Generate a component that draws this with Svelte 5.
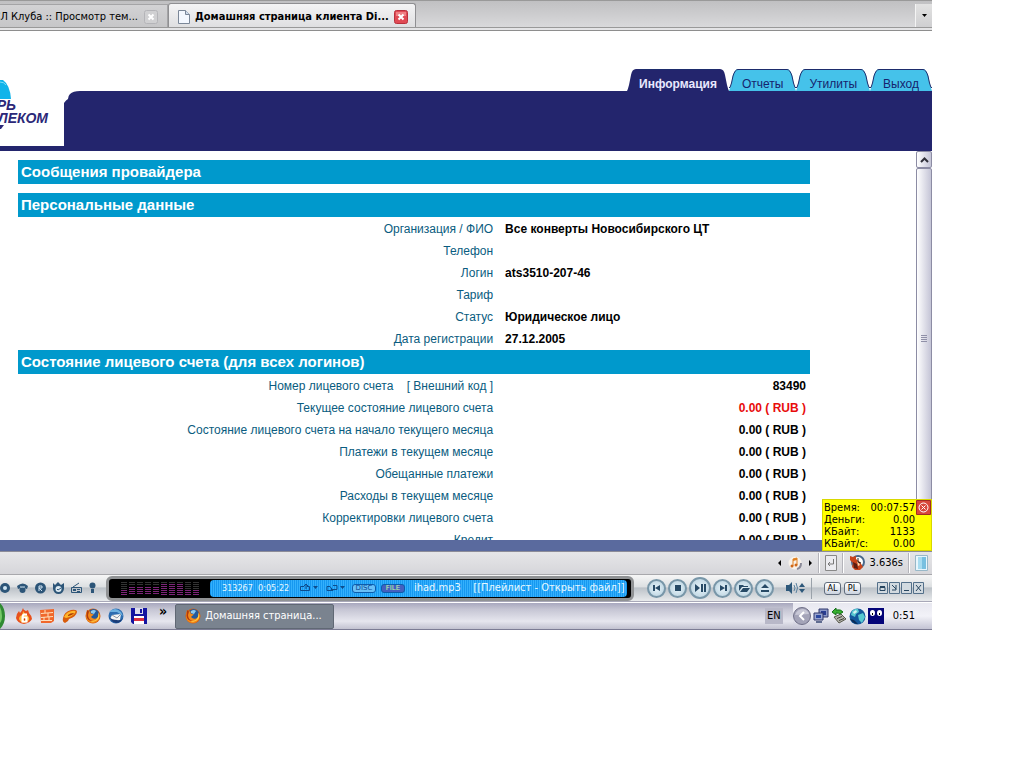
<script>
  const menu = [
    { name: 'Отчеты' },
    { name: 'Утилиты' },
    { name: 'Выход' }
  ];
  const personal = [
    ['Организация / ФИО', 'Все конверты Новосибирского ЦТ'],
    ['Телефон', ''],
    ['Логин', 'ats3510-207-46'],
    ['Тариф', ''],
    ['Статус', 'Юридическое лицо'],
    ['Дата регистрации', '27.12.2005']
  ];
  const account = [
    ['Номер лицевого счета \u00a0\u00a0 [ Внешний код ]', '83490'],
    ['Текущее состояние лицевого счета', '0.00 ( RUB )', true],
    ['Состояние лицевого счета на начало текущего месяца', '0.00 ( RUB )'],
    ['Платежи в текущем месяце', '0.00 ( RUB )'],
    ['Обещанные платежи', '0.00 ( RUB )'],
    ['Расходы в текущем месяце', '0.00 ( RUB )'],
    ['Корректировки лицевого счета', '0.00 ( RUB )'],
    ['Кредит', '0.00 ( RUB )']
  ];
  const meter = [
    ['Время:', '00:07:57'],
    ['Деньги:', '0.00'],
    ['КБайт:', '1133'],
    ['КБайт/с:', '0.00']
  ];
  const spectrum = [2, 3, 3, 3, 3, 4, 4, 4, 2, 2];
  const transport = [
    { label: 'Назад', d: 'M5 6h2v6H5zM12 6v6L7 9z' },
    { label: 'Стоп', d: 'M6 6h6v6H6z' },
    { label: 'Пуск', d: 'M4 5l5 4-5 4zM10 5h2v8h-2zM13 5h2v8h-2z' },
    { label: 'Вперёд', d: 'M6 6l5 3-5 3zM11 6h2v6h-2z' },
    { label: 'Открыть', d: 'M4 6h4l1 1h4v1H7l-3 4zM8 9h7l-3 4H5z' },
    { label: 'Извлечь', d: 'M9 5l4 4H5zM5 11h8v2H5z' }
  ];
</script>

{#snippet firefox(size)}
  <svg width={size} height={size} viewBox="0 0 16 16" aria-hidden="true">
    <circle cx="8" cy="8" r="7.500" fill="#d8600c" />
    <circle cx="8.500" cy="6.500" r="5.500" fill="#245a9e" />
    <path d="M6 3q3-2 5 0L9 6 6 5z" fill="#8cc8ee" />
    <path d="M2 2l2 1.500Q5 3 6 4L5 5l2 1 2 .5-2 1.500L6 9q2 2.500 5 1.500 3-1.500 2.500-5 2 4-.5 7T7 15Q1.500 14 1 8.500 1 5 2 2z" fill="#f28a1c" />
    <path d="M2 2l2 1.500L3 7q0 5 5 6Q2 13 1.500 8z" fill="#b23a0c" />
    <path d="M13.500 4.500q2.500 5-2 8-3 2-6 .5 5 .5 7-3 1-2 1-5.500z" fill="#ffd24a" />
  </svg>
{/snippet}

<div class="desktop">
  <nav class="browser-tabs">
    <button class="btab old"><span>СЛ Клуба :: Просмотр тем...</span>
      <svg width="14" height="14" viewBox="0 0 14 14" aria-hidden="true"><rect x=".5" y=".5" width="13" height="13" rx="2" fill="#d0d0d2" stroke="#b4b4b8" /><path d="M4.500 4.500l5 5m0-5l-5 5" stroke="#fff" stroke-width="2" /></svg>
    </button>
    <button class="btab current">
      <svg width="12" height="14" viewBox="0 0 12 14" aria-hidden="true"><path d="M.5.5h7l4 4v9H.5z" fill="#f4f8ff" stroke="#7b8798" /><path d="M7.500.5v4h4" fill="#cfdcee" stroke="#7b8798" /></svg>
      <strong>Домашняя страница клиента Di...</strong>
      <svg width="14" height="14" viewBox="0 0 14 14" aria-hidden="true"><rect x=".5" y=".5" width="13" height="13" rx="2" fill="#e04a54" stroke="#b8303c" /><path d="M2 2h10v4H2z" fill="#ee8084" /><path d="M4.500 4.500l5 5m0-5l-5 5" stroke="#fff" stroke-width="2" /></svg>
    </button>
    <button class="all-tabs" aria-label="Список вкладок"><svg width="5" height="3" viewBox="0 0 5 3" aria-hidden="true"><path d="M0 0h5L2.500 3z" /></svg></button>
  </nav>

  <header>
    <div class="logo">
      <svg width="12" height="19" viewBox="0 0 12 19" aria-hidden="true"><path d="M0 0h3q7 5 8 19H0z" fill="#0fb4ea" /><path d="M0 2q4 0 6 3" fill="none" stroke="#7fdcf6" /></svg>
      <div class="logo-name"><span>СИБИРЬ</span><span>ТЕЛЕКОМ</span></div>
      <svg width="4" height="4" viewBox="0 0 4 4" aria-hidden="true"><path d="M0 0h4L1 4H0z" fill="#2b2878" /></svg>
    </div>
    <div class="banner">
      <nav class="menu">
        <a class="active" href="#info">
          <svg class="edge" width="12" height="22" viewBox="0 0 12 22" aria-hidden="true"><path d="M12 0H9Q5 0 4 6L2 16Q1 20 0 22h12z" fill="#23256d" /></svg>
          <span>Информация</span>
          <svg class="edge" width="12" height="22" viewBox="0 0 12 22" aria-hidden="true"><path d="M0 0h3q4 0 5 6l2 10q1 4 2 6H0z" fill="#23256d" /></svg>
        </a>
        {#each menu as item}
          <a href="#menu">
            <svg class="edge" width="13" height="22" viewBox="0 0 13 22" aria-hidden="true"><path d="M13 0H9Q6 0 4 6L2 16 0 22h13z" fill="#45c2ea" /><path d="M13 .5H9Q6 .5 4 7L2.500 14 1 18.500H0" fill="none" stroke="#1d2c6c" /></svg>
            <span>{item.name}</span>
            <svg class="edge" width="13" height="22" viewBox="0 0 13 22" aria-hidden="true"><path d="M0 0h4q3 0 5 6l2 10 2 6H0z" fill="#45c2ea" /><path d="M0 .5h4Q7 .5 9 7l1.500 7 1.500 4.500h1" fill="none" stroke="#1d2c6c" /></svg>
          </a>
        {/each}
      </nav>
      <svg class="corner" width="16" height="12" viewBox="0 0 16 12" aria-hidden="true"><path d="M0 0h16Q9 0 6 3 4 5 4 8 2 9 0 12z" fill="#fff" /></svg>
    </div>
  </header>

  <main>
    <div class="content">
      <h2>Сообщения провайдера</h2>
      <h2 class="spaced">Персональные данные</h2>
      <table>
        <tbody>
          {#each personal as [name, value]}
            <tr><th scope="row">{name}</th><td>{value}</td></tr>
          {/each}
        </tbody>
      </table>
      <h2>Состояние лицевого счета (для всех логинов)</h2>
      <table class="money">
        <tbody>
          {#each account as [name, value, debt]}
            <tr><th scope="row">{name}</th><td class:debt>{value}</td></tr>
          {/each}
        </tbody>
      </table>
    </div>
    <div class="scroll">
      <button aria-label="Вверх"><svg width="9" height="6" viewBox="0 0 9 6" aria-hidden="true"><path d="M1 5l3.500-3.500L8 5" fill="none" stroke="#30303a" stroke-width="2" /></svg></button>
      <div class="thumb"><i></i><i></i><i></i><i></i></div>
    </div>
  </main>

  <div class="edge-band"></div>

  <div class="status">
    <svg width="36" height="16" viewBox="0 0 36 16" aria-hidden="true">
      <path d="M4 5v6L1 8zM32 5v6l3-3z" fill="#000" />
      <circle cx="18" cy="8" r="6.500" fill="#f8f2ea" /><path d="M20 14q4-1 4-6" fill="none" stroke="#8a8a98" stroke-width="2" />
      <path d="M16 11V4l4-1v7" fill="none" stroke="#e08020" /><circle cx="15" cy="11" r="1.500" fill="#d06818" /><circle cx="19" cy="10" r="1.500" fill="#d06818" /><path d="M16 4l4-1v2l-4 1z" fill="#e08020" />
    </svg>
    <b></b>
    <svg width="12" height="16" viewBox="0 0 12 16" aria-hidden="true"><path d="M.5.5h11v15H.5z" fill="#ececf0" stroke="#888" /><path d="M8.500 4v5H3m2-2L3 9l2 2" fill="none" stroke="#777" /></svg>
    <b></b>
    <svg width="16" height="16" viewBox="0 0 16 16" aria-hidden="true">
      <circle cx="9" cy="7" r="6" fill="#fff" stroke="#48688c" stroke-width="2" />
      <path d="M1 1l3 1 3-1v3l4 3 3 5-3 3H6L3 12 4 8 1 5z" fill="#c8441a" /><path d="M4 7l4 2 1 5-4-1z" fill="#5c1c10" /><path d="M8 5l3 5-2 1z" fill="#f8d8b0" /><path d="M9 3v4l3 1" fill="none" stroke="#222" />
    </svg>
    <span>3.636s</span>
    <b></b>
    <svg width="13" height="16" viewBox="0 0 13 16" aria-hidden="true"><path d="M.5.5h12v15H.5z" fill="#e8f6fc" stroke="#98b8c8" /><path d="M3 2h8v12H3z" fill="#78c0e0" /><path d="M3 2h4v12H3z" fill="#a8dcf0" /></svg>
  </div>

  <section class="player">
    <svg class="modes" width="98" height="16" viewBox="0 0 98 16" aria-hidden="true">
      <g fill="#2c5578">
        <circle cx="5" cy="8" r="5" /><circle cx="5" cy="8" r="2" fill="#cfe4f2" />
        <path d="M17 6q6-5 11 0l-1 3-3-1v-1h-3v1l-3 1z" /><circle cx="22.500" cy="10" r="3" /><path d="M20 7h5" stroke="#cfe4f2" />
        <circle cx="40.500" cy="8" r="5.500" /><path d="M39 11V6h3v2h-3l3 3" fill="none" stroke="#cfe4f2" />
        <path d="M53 3l2 2 3-3 3 3 3-2v6q-1 5-5.500 5T53 9z" /><circle cx="58.500" cy="9" r="3" fill="#dceaf2" /><path d="M57 9l1 1 3-2" fill="none" stroke="#2c5578" />
        <path d="M71.500 7.500h10v5h-10zM73 7l6-4" fill="none" stroke="#2c5578" /><path d="M73 9h3v2h-3zM77 9h3v1h-3zM77 11h3v1h-3z" />
        <circle cx="92.500" cy="5.500" r="3" /><path d="M91 9h3v4h-3z" />
      </g>
    </svg>
    <div class="screen">
      <div class="spectrum">
        {#each spectrum as level}
          <div class="band"><i style:height="{level * 3}px"></i></div>
        {/each}
      </div>
      <div class="lcd">
        <span class="small">313267&nbsp; 0:05:22</span>
        <svg width="46" height="10" viewBox="0 0 46 10" aria-hidden="true"><path d="M5 3.500H1.500v4h9v-4H8M7 1v5M5 3l2-2 2 2M28 3.500h3l3 4h-6zM34 2.500h4v4h-6" fill="none" stroke="#0d4c8c" /><path d="M14 3h5l-2.500 3zM41 3h5l-2.500 3z" fill="#0d4c8c" /></svg>
        <em>DISC</em><em class="on">FILE</em>
        <span class="title">ihad.mp3 &nbsp;&nbsp; [[Плейлист - Открыть файл]]</span>
      </div>
    </div>
    <div class="transport">
      {#each transport as control, i}
        <button class:big={i === 2} aria-label={control.label}><svg width="18" height="18" viewBox="0 0 18 18" aria-hidden="true"><path d={control.d} fill="#274a66" /></svg></button>
      {/each}
      <svg class="volume" width="22" height="14" viewBox="0 0 22 14" aria-hidden="true"><path d="M1 4h3l3-3v12l-3-3H1z" fill="#2d587a" /><path d="M9 4q2 3 0 6M11 2q3 5 0 10" fill="none" stroke="#5a82a0" /><path d="M14 6l3-4 3 4zM14 8h6l-3 4z" fill="#2d587a" /></svg>
    </div>
    <button class="key">AL</button><button class="key">PL</button>
    <svg class="windows" width="48" height="12" viewBox="0 0 48 12" aria-hidden="true">
      <g fill="#d2dae0" stroke="#54708a"><path d="M1.500.5h10v11h-10zM13.500.5h10v11h-10zM25.500.5h10v11h-10zM37.500.5h10v11h-10z" /></g>
      <path d="M4 5.500h5v3H4zM4 4.500h5M16 3l4 4m0-4v5h-4M28 8.500h5M40 3l5 6m0-6l-5 6" fill="none" stroke="#27455f" />
    </svg>
  </section>

  <footer>
    <svg class="start" width="5" height="26" viewBox="0 0 5 26" aria-hidden="true"><path d="M0 0q5 5 5 13t-5 13z" fill="#2f8a32" /><path d="M0 4q2 4 2 9t-2 7z" fill="#76c868" /></svg>
    <div class="quick">
      <svg width="16" height="16" viewBox="0 0 16 16" aria-hidden="true"><path d="M7 0q0 2 3 3l2-1 1 3q3 3 3 6-2 4-8 5-7-1-8-6Q0 6 3 3l1 2Q6 3 7 0z" fill="#e8501c" /><path d="M7 3q1 2 4 4 3 3 2 5-2 3-5 3-4-1-5-4 0-3 3-4 1-2 1-4z" fill="#ffb83c" /><path d="M11 6.500H8Q6.500 7 6.500 10v3.500h4v-4h-4" fill="none" stroke="#fff" stroke-width="2" /><path d="M8 10.500h1v2H8z" fill="#c02818" /></svg>
      <svg width="16" height="16" viewBox="0 0 16 16" aria-hidden="true"><path d="M1 2l14-1v12l-3 2H2z" fill="#f0682c" /><path d="M2 5.500l12-1M2 9.500l12-1M2 12.500h11M6 2v3m3 0v4M5 9v4m5-4v4" fill="none" stroke="#ffe0bc" /></svg>
      <svg width="16" height="16" viewBox="0 0 16 16" aria-hidden="true"><path d="M1 10Q2 4 9 2q6-1 6 2-1 5-8 7l-1 2-3 2q-3-1-2-5z" fill="#d85c0c" /><path d="M2 9q2-5 8-6 5-1 3 2-3 4-9 5z" fill="#ffb428" /><path d="M6 7q2-2 6-2-1 2-6 3z" fill="#a83808" /></svg>
      {@render firefox(16)}
      <svg width="16" height="16" viewBox="0 0 16 16" aria-hidden="true"><circle cx="8" cy="8" r="7.500" fill="#2c6cb0" /><path d="M1 4q6-6 12 0l2 4-6-4z" fill="#6cb0e0" /><path d="M4 7l9-1-1 6-6 2-4-3z" fill="#f4f4f4" /><path d="M4 7l5 3 4-4" fill="none" stroke="#8a98a8" /><path d="M1 9q2 5 7 6 5 0 7-5-2 3-6 2-5 0-8-3z" fill="#1b3d78" /></svg>
      <svg width="16" height="16" viewBox="0 0 16 16" aria-hidden="true"><path d="M0 0h16v16H2l-2-2z" fill="#1414a0" /><path d="M4 0h8v6H4z" fill="#dcdcec" /><path d="M9 1h2v4H9z" fill="#1414a0" /><path d="M3 8h10v8H3z" fill="#fff" /><path d="M3 10h10v3H3z" fill="#d83040" /></svg>
    </div>
    <span class="more">»</span>
    <button class="task">{@render firefox(16)}<span>Домашняя страница...</span></button>
    <span class="lang">EN</span>
    <div class="tray">
      <svg class="chevron" width="18" height="18" viewBox="0 0 18 18" aria-hidden="true"><circle cx="9" cy="9" r="8.500" fill="#a4a4b8" stroke="#707088" /><path d="M2 8q2-6 8-6 5 1 6 5z" fill="#c8c8d6" /><path d="M11 5L7 9l4 4" fill="none" stroke="#fff" stroke-width="2" /></svg>
      <svg width="16" height="16" viewBox="0 0 16 16" aria-hidden="true"><path d="M6 1h9v8H6z" fill="#8c98c8" stroke="#30386c" /><path d="M8 3h5v4H8z" fill="#283c90" /><path d="M1 5h9v7H1z" fill="#98a4d0" stroke="#30386c" /><path d="M3 7h5v3H3z" fill="#2c48a0" /><path d="M3 13h6v2H3z" fill="#606c90" /></svg>
      <svg width="16" height="16" viewBox="0 0 16 16" aria-hidden="true"><path d="M3 9l7-3 5 5-7 4z" fill="#b4b4ac" stroke="#58584c" /><path d="M6 10.500l5-2M8 12.500l5-2" stroke="#404038" /><path d="M1 4l4-4v2q5-1 7 2L9 6Q8 5 5 5v2z" fill="#38b030" stroke="#147018" /></svg>
      <svg width="17" height="17" viewBox="0 0 17 17" aria-hidden="true"><circle cx="8.500" cy="8.500" r="8" fill="#14589c" /><path d="M3 3q3-3 6-2l1 3-3 2-1 3-4-2zM9 7l5-2 2 4-3 6-3-3z" fill="#58c8d0" /><path d="M4 4l3-2 1 2-3 2z" fill="#d8f4f4" /><path d="M1 11q3 5 8 5l-4-4z" fill="#0a2c58" /></svg>
      <svg width="16" height="16" viewBox="0 0 16 16" aria-hidden="true"><path d="M0 0h16v16H0z" fill="#040478" /><ellipse cx="4.500" cy="5" rx="2.500" ry="3" fill="#fff" /><ellipse cx="11.500" cy="5" rx="2.500" ry="3" fill="#fff" /><path d="M4 5h1v2H4zM11 5h1v2h-1z" /></svg>
      <time>0:51</time>
    </div>
  </footer>

  <aside class="meter">
    <dl>
      {#each meter as [name, value]}
        <div><dt>{name}</dt><dd>{value}</dd></div>
      {/each}
    </dl>
    <button aria-label="Закрыть"><svg width="15" height="15" viewBox="0 0 15 15" aria-hidden="true"><path d="M.5.5h14v14H.5z" fill="#d8483c" stroke="#a02c24" /><circle cx="7.500" cy="7.500" r="4.500" fill="none" stroke="#fff" /><path d="M5.500 5.500l4 4m0-4l-4 4" stroke="#fff" /></svg></button>
  </aside>
</div>

<style>
  :global(body) { margin: 0; background: #fff; }
  * { box-sizing: border-box; }
  button { margin: 0; padding: 0; border: 0; background: none; font: inherit; color: inherit; }
  svg { display: block; flex: none; }
  .desktop {
    position: relative;
    display: flex;
    flex-direction: column;
    width: calc(100% - 92px);
    height: calc(100vh - 138px);
    overflow: hidden;
    font: 11px/14px "DejaVu Sans Condensed", "DejaVu Sans", sans-serif;
    color: #000;
    white-space: nowrap;
  }

  .browser-tabs {
    display: flex;
    flex: none;
    align-items: flex-end;
    height: 31px;
    padding-bottom: 3px;
    border-top: 1px solid #999;
    border-bottom: 1px solid #8e8e8e;
    background: linear-gradient(#c0c0c2, #dcdcde);
    box-shadow: inset 0 -2px #e4e4e6, inset 0 -3px #999;
  }
  .btab { display: flex; align-items: center; height: 23px; padding-top: 2px; border: 1px solid #a4a4a6; border-bottom: 0; }
  .old { justify-content: flex-end; width: 168px; padding-right: 9px; gap: 6px; border-left: 0; background: linear-gradient(#d2d2d4, #c6c6c8); }
  .current { height: 24px; padding: 2px 7px 0 9px; gap: 5px; border-radius: 3px 3px 0 0; border-color: #8f8f92; background: linear-gradient(#f4f4f5, #dfdfe1); }
  .all-tabs { display: flex; align-items: center; justify-content: center; width: 17px; height: 23px; margin-left: auto; border-left: 1px solid #f4f4f4; background: linear-gradient(#e2e2e2, #cfcfd1); }

  header { display: flex; flex: none; height: 120px; border-bottom: 5px solid #23256d; font-family: "Liberation Sans", Arial, sans-serif; }
  .logo { display: flex; flex-direction: column; width: 64px; padding-top: 49px; overflow: hidden; color: #2b2878; }
  .logo-name { display: flex; flex-direction: column; align-items: flex-end; width: 48px; font: italic bold 14px/13px "Liberation Sans", Arial, sans-serif; }
  .logo-name span:first-child { padding-right: 32px; }
  .banner { position: relative; display: flex; flex: 1; flex-direction: column; padding-top: 38px; background: linear-gradient(#fff 60px, #23256d 60px); }
  .corner { position: absolute; left: 0; top: 60px; }
  .menu { display: flex; justify-content: flex-end; height: 22px; font-size: 12px; }
  .menu a { display: flex; color: #16246e; text-decoration: none; }
  .menu span { padding-top: 7px; line-height: 14px; background: #45c2ea; border-top: 1px solid #1d2c6c; }
  .menu .active { font-weight: bold; color: #e8e8ff; }
  .menu .active span { background: #23256d; }

  main { display: flex; flex: 1; min-height: 0; }
  .content { flex: 1; padding: 9px 106px 0 18px; overflow: hidden; font-family: "Liberation Sans", Arial, sans-serif; }
  h2 { margin: 0; padding-left: 3px; background: #0099cc; color: #fff; font-size: 15px; line-height: 24px; }
  .spaced { margin-top: 9px; }
  table { width: 100%; margin-top: 1px; border-collapse: collapse; table-layout: fixed; font-size: 12px; }
  th { width: 61%; height: 22px; padding: 0 8px 0 0; color: #0a5c80; font-weight: normal; text-align: right; }
  td { padding: 0 4px; font-weight: bold; }
  .money td { text-align: right; }
  .money .debt { color: #e80c0c; }
  .scroll { display: flex; flex-direction: column; width: 16px; background: #f2f2f6; }
  .scroll button, .thumb { border: 1px solid #8c8ca4; border-radius: 2px; background: linear-gradient(90deg, #fff, #c4c4d6); }
  .scroll button { display: flex; align-items: center; justify-content: center; height: 17px; }
  .thumb { display: flex; flex: 1; flex-direction: column; align-items: center; justify-content: center; gap: 1px; margin-bottom: 32px; }
  .thumb i { width: 6px; height: 1px; background: #9090a8; }

  .edge-band { flex: none; height: 12px; border-bottom: 1px solid #8c8c98; background: #5a6a9e; }
  .status { display: flex; flex: none; align-items: center; justify-content: flex-end; gap: 5px; height: 22px; padding-right: 4px; background: linear-gradient(#e6e6e8, #d6d6da); }
  .status b { width: 2px; height: 20px; border-left: 1px solid #b4b4ba; background: #fff; }

  .player { display: flex; flex: none; align-items: center; height: 28px; padding-right: 8px; border-top: 1px solid #a8a8ac; border-bottom: 1px solid #a8a8b8; background: linear-gradient(#f6f6f6, #dde0e2 45%, #bcc2c8 50%, #e8eaec); }
  .screen { display: flex; flex: 1; align-items: center; height: 25px; margin-left: 8px; padding: 0 4px 0 12px; border: 3px solid #909294; border-radius: 6px; background: #000; }
  .spectrum { display: flex; gap: 2px; width: 89px; }
  .band { display: flex; align-items: flex-end; width: 6px; height: 14px; background: repeating-linear-gradient(#000 0 1px, #333 1px 2px); }
  .band i { width: 6px; background: repeating-linear-gradient(#000 0 1px, #7c2478 1px 2px); }
  .lcd { display: flex; flex: 1; align-items: center; height: 17px; padding-left: 12px; border-radius: 4px; background: repeating-linear-gradient(90deg, #1698f0 0 1px, #34b0fc 1px 2px); color: #e8f8ff; }
  .small { width: 77px; font-size: 9px; }
  .lcd svg { margin-right: 7px; }
  .lcd em { width: 24px; height: 9px; margin-right: 5px; border: 1px solid #0c5cac; border-radius: 3px; background: #68c0f8; color: #0c4890; font: 7px/7px "DejaVu Sans", sans-serif; text-align: center; }
  .lcd em.on { background: #4460c0; color: #c0f8a0; }
  .title { margin-left: 4px; }
  .transport { display: flex; align-items: center; gap: 2px; height: 21px; margin: 0 12px 0 13px; padding-right: 4px; border-right: 1px solid #9aa2aa; }
  .transport button { display: flex; align-items: center; justify-content: center; width: 19px; height: 19px; border: 2px solid #7896a8; border-radius: 50%; background: radial-gradient(#e8f4fa, #b4cedc); }
  .transport .big { width: 22px; height: 22px; }
  .volume { margin-left: 9px; }
  .key { width: 17px; height: 13px; margin-right: 3px; border: 1px solid #606c7c; border-radius: 3px; background: linear-gradient(#fff, #ccd4e0); font-size: 9px; line-height: 11px; }
  .windows { margin-left: 12px; }

  footer { display: flex; flex: none; align-items: center; height: 28px; border-top: 1px solid #fff; border-bottom: 1px solid #7c7c94; background: linear-gradient(#a8a8be, #c6c6d4 25%, #e6e6ee 70%, #c2c2d0); }
  .quick { display: flex; gap: 7px; margin-left: 11px; }
  .more { margin: 0 8px 10px 12px; font-size: 14px; font-weight: bold; line-height: 12px; }
  .task { display: flex; align-items: center; gap: 4px; width: 159px; height: 25px; padding-left: 9px; border: 1px solid #606874; border-radius: 2px; background: #7a838f; color: #fff; }
  .lang { margin: 0 10px 0 auto; padding: 1px 2px; background: #b8b8c8; }
  .tray { display: flex; align-items: center; gap: 2px; height: 26px; padding-right: 17px; background: linear-gradient(#e8e8f0, #f2f2f8 50%, #c4c4d4); }
  .tray time { margin-left: 7px; }

  .meter { position: absolute; right: 0; bottom: 79px; display: flex; width: 110px; border: 1px solid #d8d800; background: #ff0; }
  .meter dl { flex: 1; margin: 0; padding: 2px 0 0 1px; }
  .meter dl div { display: flex; justify-content: space-between; line-height: 12px; }
  .meter dd { margin: 0 1px 0 0; }
  .meter button { align-self: flex-start; }
</style>
